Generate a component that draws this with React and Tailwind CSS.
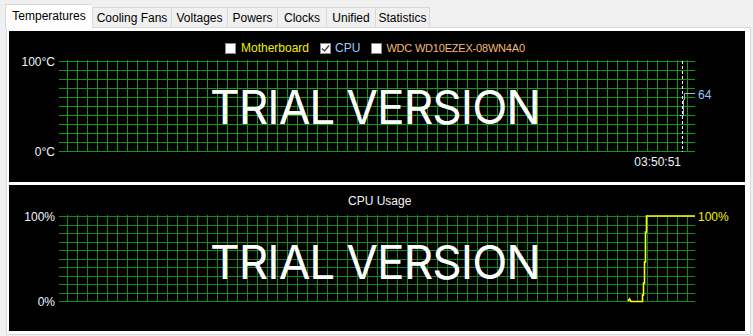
const tabs = [
  { label: 'Temperatures', w: 'w-[87px]' },
  { label: 'Cooling Fans', w: 'w-[79px]' },
  { label: 'Voltages', w: 'w-[56px]' },
  { label: 'Powers', w: 'w-[50px]' },
  { label: 'Clocks', w: 'w-[49px]' },
  { label: 'Unified', w: 'w-[49px]' },
  { label: 'Statistics', w: 'w-[55px]' },
];

const range = (n) => Array.from({ length: n }, (_, i) => i);

const Grid = ({ top, rows, step, color }) => (
  <g stroke={color} strokeWidth="1" shapeRendering="crispEdges">
    {range(rows + 1).map((k) => {
      const y = Math.round(top + step * k) + 0.5;
      return <line key={'h' + k} x1="59" x2="695" y1={y} y2={y} />;
    })}
    {range(63).map((k) => {
      const x = 67.5 + 10 * k;
      return <line key={'v' + k} x1={x} x2={x} y1={top - 1} y2={Math.round(top + step * rows) + 1} />;
    })}
  </g>
);

const Trial = ({ y }) => (
  <text
    x="375"
    y={y}
    textAnchor="middle"
    fill="#ffffff"
    fontFamily="Inter, 'Open Sans', sans-serif"
    fontWeight="380"
    fontSize="46"
    letterSpacing="-1"
  >
    TRIAL VERSION
  </text>
);

const Check = ({ checked }) => (
  <span className="w-[11px] h-[11px] bg-white border border-[#8a8a8a] flex items-center justify-center">
    {checked && (
      <svg width="9" height="9" viewBox="0 0 9 9">
        <path d="M1 4.5 L3.5 7 L8 1.5" fill="none" stroke="#444" strokeWidth="1.4" />
      </svg>
    )}
  </span>
);

const label = { fontFamily: "'Liberation Sans', Arial, sans-serif", fontSize: 12 };

export default function App() {
  return (
    <div className="w-[753px] h-[336px] bg-[#f0f0f0] pl-[5px] pt-[4px] font-['Liberation_Sans',Arial,sans-serif] text-[12px] text-black overflow-hidden">
      {/* Tabs */}
      <div className="flex items-end h-[24px] relative z-10">
        {tabs.map((t, i) =>
          i === 0 ? (
            <div
              key={t.label}
              className={`${t.w} h-[24px] bg-white border-t border-l border-[#d9d9d9] flex items-center justify-center pb-[1px]`}
            >
              {t.label}
            </div>
          ) : (
            <div
              key={t.label}
              className={`${t.w} h-[20px] mb-px bg-[#f0f0f0] border-t border-l border-[#d9d9d9] flex items-center justify-center ${
                i === tabs.length - 1 ? 'border-r' : ''
              }`}
            >
              {t.label}
            </div>
          )
        )}
      </div>

      {/* Panel */}
      <div className="-mt-px ml-px w-[745px] border border-[#d9d9d9] bg-white pl-[2px] py-[3px] flex flex-col gap-[3px]">
        {/* Temperatures chart */}
        <div className="w-[736px] h-[151px] bg-black flex flex-col">
          <div className="h-[25px] pt-[9px] pl-[216px] flex items-center">
            <div className="flex items-center h-[12px]">
              <Check />
              <span className="ml-[5px] text-[#f0f000]">Motherboard</span>
              <span className="ml-[11px]"><Check checked /></span>
              <span className="ml-[4px] text-[#9ec9ff]">CPU</span>
              <span className="ml-[11px]"><Check /></span>
              <span className="ml-[4px] text-[11px] tracking-[-0.2px] text-[#f3b877]">WDC WD10EZEX-08WN4A0</span>
            </div>
          </div>
          <svg width="736" height="126" viewBox="9 56 736 126" className="overflow-visible">
            <Grid top={61} rows={10} step={9} color="#109a10" />
            <Trial y={124} />
            <line x1="682.5" x2="682.5" y1="61" y2="152" stroke="#ffffff" strokeDasharray="3 2" />
            <polyline
              points="680,115.5 683.5,115.5 683.5,99.5 684.5,99.5 684.5,93.5 695,93.5"
              fill="none"
              stroke="#8fb8f0"
              strokeWidth="1"
            />
            <text x="698" y="99" fill="#9cc3f5" style={label}>64</text>
            <text x="55" y="66" textAnchor="end" fill="#eef4ff" style={label}>100°C</text>
            <text x="55" y="155.5" textAnchor="end" fill="#eef4ff" style={label}>0°C</text>
            <text x="681" y="166" textAnchor="end" fill="#eef4ff" style={label}>03:50:51</text>
          </svg>
        </div>

        {/* CPU usage chart */}
        <div className="w-[736px] h-[146px] bg-black flex flex-col">
          <div className="h-[23px] pt-[9px] pl-[339px] leading-[14px] text-[#f4f4f4]">CPU Usage</div>
          <svg width="736" height="123" viewBox="9 208 736 123" className="overflow-visible">
            <Grid top={216} rows={10} step={8.5} color="#138a13" />
            <Trial y={279} />
            <polyline
              points="628,301 629.5,299 631,301.5 642.5,301.5 642.5,295 643.5,295 643.5,283 644.5,283 644.5,262 645.5,262 645.5,232 646.5,232 646.5,216 695,216"
              fill="none"
              stroke="#ffff00"
              strokeWidth="1.6"
            />
            <text x="698" y="220.5" fill="#f0f000" style={label}>100%</text>
            <text x="55" y="220.5" textAnchor="end" fill="#eef4ff" style={label}>100%</text>
            <text x="55" y="305.5" textAnchor="end" fill="#eef4ff" style={label}>0%</text>
          </svg>
        </div>
      </div>
    </div>
  );
}
